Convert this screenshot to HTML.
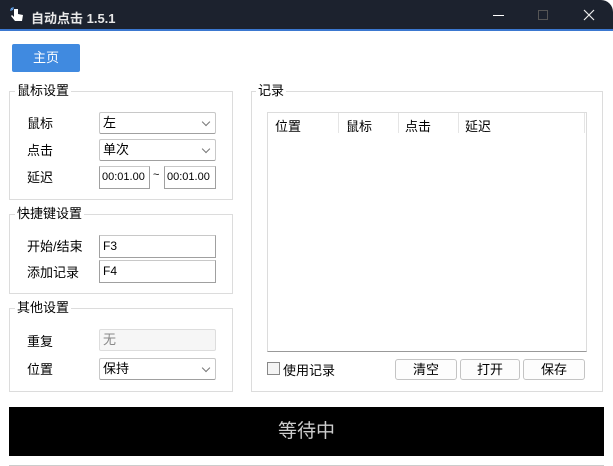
<!DOCTYPE html><html><head><meta charset="utf-8"><style>
*{box-sizing:border-box;margin:0;padding:0}
body{width:613px;height:466px;background:#fff;font-family:"Liberation Sans","Noto Sans CJK SC",sans-serif;font-size:13px;color:#000;position:relative;overflow:hidden}
.a{position:absolute}
.tb{left:0;top:0;width:613px;height:31px;background:#1c222e;border-bottom:2px solid #3b78d0;border-top-right-radius:12px}
.grp{border:1px solid #dcdcdc}
.gt{background:#fff;padding:0 2px;font-size:13px;line-height:16px}
.cb{border:1px solid #c8c8c8;border-bottom-color:#a0a0a0;background:#fff;height:22px;line-height:20px;padding-left:3px;border-radius:2px}
.cb.d::after{content:"";position:absolute;right:6px;top:6px;width:5px;height:5px;border-right:1px solid #777;border-bottom:1px solid #777;transform:rotate(45deg)}
.in{border:1px solid #a0a0a0;border-top-color:#c8c8c8;height:23px;line-height:21px;padding-left:3px;font-size:12px}
.btn{border:1px solid #c4c4c4;border-radius:3px;height:21px;line-height:19px;text-align:center;background:#fdfdfd}
</style></head><body>
<div class="a tb"></div>
<svg class="a" style="left:10px;top:7px" width="14" height="17" viewBox="0 0 14 17"><path d="M4 2v8l-2-2-1 1 4 5h7l1-6-5-1V2z" fill="#fff"/><path d="M1 1l2 2M3 0v2M0 3h2" stroke="#6ab0ff" stroke-width="1"/></svg>
<div class="a" style="left:31px;top:8px;color:#e8e8e8;font-size:13px;font-weight:bold">自动点击 1.5.1</div>
<div class="a" style="left:493px;top:15px;width:11px;height:1px;background:#fff"></div>
<div class="a" style="left:538px;top:10px;width:10px;height:10px;border:1px solid #555"></div>
<svg class="a" style="left:583px;top:9px" width="12" height="12"><path d="M1 1L11 11M11 1L1 11" stroke="#eee" stroke-width="1.2"/></svg>
<div class="a" style="left:12px;top:44px;width:68px;height:28px;background:#408ae0;border-radius:2px;color:#fff;text-align:center;line-height:28px">主页</div>

<div class="a grp" style="left:9px;top:91px;width:224px;height:109px"></div>
<div class="a gt" style="left:15px;top:83px">鼠标设置</div>
<div class="a" style="left:27px;top:113px">鼠标</div>
<div class="a" style="left:27px;top:140px">点击</div>
<div class="a" style="left:27px;top:167px">延迟</div>
<div class="a cb d" style="left:99px;top:112px;width:117px">左</div>
<div class="a cb d" style="left:99px;top:139px;width:117px">单次</div>
<div class="a in" style="left:99px;top:166px;width:51px;font-size:11px;padding-left:2px">00:01.00</div>
<div class="a" style="left:153px;top:169px;font-size:11px">~</div>
<div class="a in" style="left:164px;top:166px;width:52px;font-size:11px;padding-left:2px">00:01.00</div>

<div class="a grp" style="left:9px;top:214px;width:224px;height:80px"></div>
<div class="a gt" style="left:15px;top:206px">快捷键设置</div>
<div class="a" style="left:27px;top:236px">开始/结束</div>
<div class="a" style="left:27px;top:262px">添加记录</div>
<div class="a in" style="left:99px;top:235px;width:117px">F3</div>
<div class="a in" style="left:99px;top:260px;width:117px">F4</div>

<div class="a grp" style="left:9px;top:308px;width:224px;height:84px"></div>
<div class="a gt" style="left:15px;top:300px">其他设置</div>
<div class="a" style="left:27px;top:331px">重复</div>
<div class="a" style="left:27px;top:359px">位置</div>
<div class="a cb" style="left:99px;top:329px;width:117px;background:#f6f6f6;border-color:#ddd;color:#888">无</div>
<div class="a cb d" style="left:99px;top:358px;width:117px">保持</div>

<div class="a grp" style="left:251px;top:91px;width:352px;height:301px"></div>
<div class="a gt" style="left:256px;top:83px">记录</div>
<div class="a" style="left:267px;top:112px;width:320px;height:240px;border:1px solid #dcdcdc;border-bottom-color:#999"></div>
<div class="a" style="left:275px;top:116px">位置</div>
<div class="a" style="left:346px;top:116px">鼠标</div>
<div class="a" style="left:405px;top:116px">点击</div>
<div class="a" style="left:465px;top:116px">延迟</div>
<div class="a" style="left:338px;top:113px;width:1px;height:20px;background:#e5e5e5"></div>
<div class="a" style="left:398px;top:113px;width:1px;height:20px;background:#e5e5e5"></div>
<div class="a" style="left:458px;top:113px;width:1px;height:20px;background:#e5e5e5"></div>
<div class="a" style="left:584px;top:113px;width:1px;height:20px;background:#e5e5e5"></div>
<div class="a" style="left:267px;top:362px;width:13px;height:13px;border:1px solid #888;background:#f4f4f4"></div>
<div class="a" style="left:283px;top:360px">使用记录</div>
<div class="a btn" style="left:395px;top:359px;width:62px">清空</div>
<div class="a btn" style="left:460px;top:359px;width:60px">打开</div>
<div class="a btn" style="left:523px;top:359px;width:62px">保存</div>

<div class="a" style="left:9px;top:407px;width:595px;height:49px;background:#000;color:#ccc;font-size:19px;text-align:center;line-height:49px">等待中</div>
<div class="a" style="left:9px;top:465px;width:595px;height:1px;background:#ccc"></div>
</body></html>
